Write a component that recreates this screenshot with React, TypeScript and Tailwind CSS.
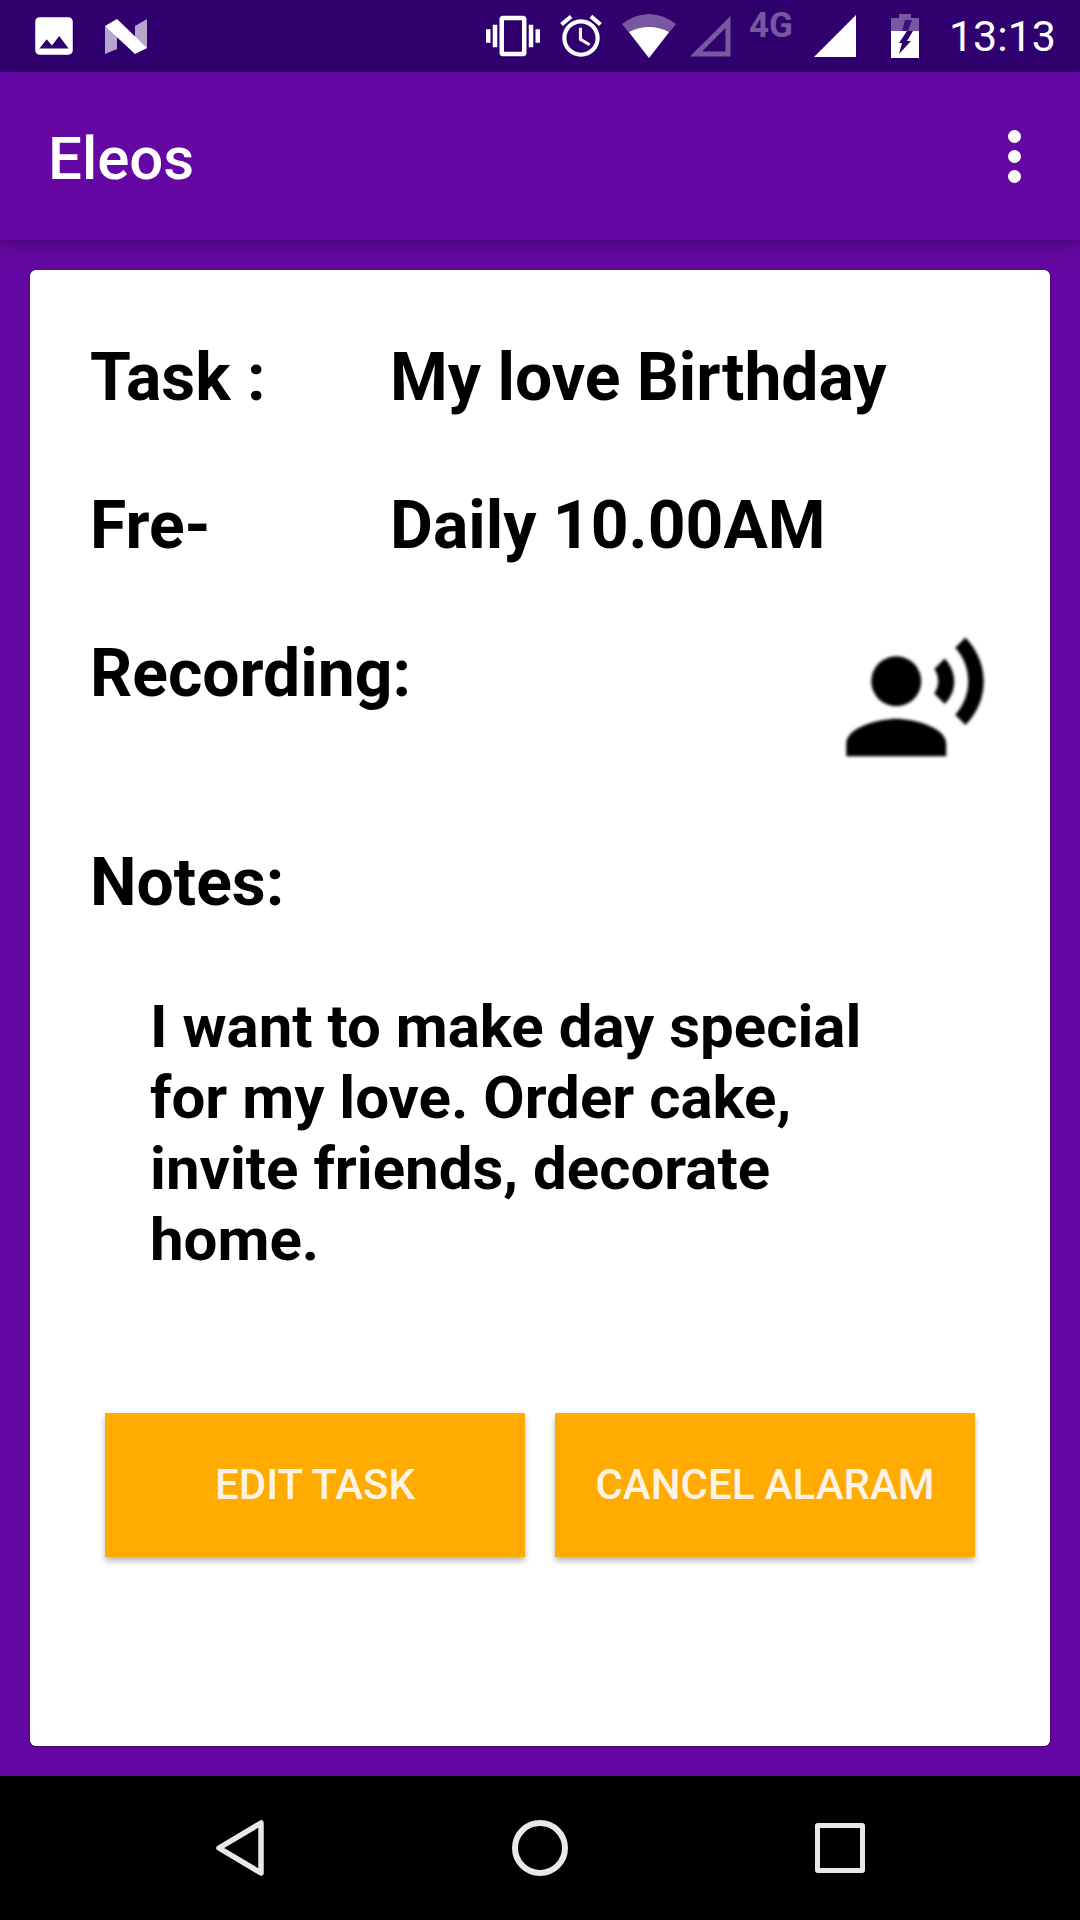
import React from 'react';

const StatusBar = () => (
  <div className="h-[72px] bg-[#30006f] flex items-center text-white shrink-0">
    {/* image notification */}
    <svg viewBox="0 0 24 24" className="w-[50px] h-[50px] ml-[29px] fill-white">
      <path d="M21 19V5c0-1.1-.9-2-2-2H5c-1.1 0-2 .9-2 2v14c0 1.1.9 2 2 2h14c1.1 0 2-.9 2-2zM8.5 13.5l2.5 3.01L14.5 12l4.5 6H5l3.5-4.5z" />
    </svg>
    {/* N logo */}
    <svg viewBox="0 0 42 35" className="w-[42px] h-[35px] ml-[26px] fill-white">
      <path d="M0 7 L12 14 V30 L0 35 Z" opacity="0.65" />
      <path d="M30 7 L42 0 V29 L30 34 Z" opacity="0.65" />
      <path d="M0 7 L12 0 L42 29 L30 35 Z" />
    </svg>
    <div className="flex-1" />
    <svg viewBox="0 0 24 24" className="w-[54px] h-[54px] fill-white">
      <path d="M0 15h2V9H0v6zm3 2h2V7H3v10zm19-8v6h2V9h-2zm-3 8h2V7h-2v10zM16.5 3h-9C6.67 3 6 3.67 6 4.5v15c0 .83.67 1.5 1.5 1.5h9c.83 0 1.5-.67 1.5-1.5v-15c0-.83-.67-1.5-1.5-1.5zM16 19H8V5h8v14z" />
    </svg>
    <svg viewBox="0 0 24 24" className="w-[50px] h-[50px] ml-[16px] fill-white">
      <path d="M22 5.72l-4.6-3.86-1.29 1.53 4.6 3.86L22 5.72zM7.88 3.39L6.6 1.86 2 5.71l1.29 1.53 4.59-3.85zM12.5 8H11v6l4.75 2.85.75-1.23-4-2.37V8zM12 4c-4.97 0-9 4.03-9 9s4.03 9 9 9c4.97 0 9-4.03 9-9s-4.03-9-9-9zm0 16c-3.87 0-7-3.13-7-7s3.13-7 7-7 7 3.13 7 7-3.13 7-7 7z" />
    </svg>
    {/* wifi */}
    <svg viewBox="0 0 54 44" className="w-[54px] h-[44px] ml-[16px] fill-white">
      <path d="M0 10 Q27 -10 54 10 L27 44 Z" opacity="0.35" />
      <path d="M7 18 Q27 8 47 18 L27 44 Z" />
    </svg>
    {/* empty signal */}
    <svg viewBox="0 0 42 42" className="w-[42px] h-[42px] ml-[13px] fill-none stroke-white opacity-35">
      <path d="M39 7 V39 H7 Z" strokeWidth="5" />
    </svg>
    <span className="ml-[18px] mb-[20px] text-[35px] leading-[36px] font-bold text-white/35 font-['Roboto',sans-serif]">4G</span>
    {/* signal */}
    <svg viewBox="0 0 42 42" className="w-[42px] h-[42px] ml-[21px] fill-white">
      <path d="M42 0 V42 H0 Z" />
    </svg>
    {/* battery */}
    <svg viewBox="0 0 28 44" className="w-[28px] h-[44px] ml-[35px]">
      <path d="M8 0 H20 V4 H28 V17 H0 V4 H8 Z" fill="white" opacity="0.35" />
      <path fillRule="evenodd" fill="white" d="M0 17 H28 V44 H0 Z M16 17 H22 L16 27 H20 L8 40 L11 29 H8 Z" />
      <path d="M14 6 H21 L17 17 H11 Z" fill="#30006f" opacity="0.8" />
    </svg>
    <span className="ml-[30px] mr-[24px] text-[43px] leading-none font-['Roboto',sans-serif]">13:13</span>
  </div>
);

const AppBar = () => (
  <div className="h-[168px] bg-[#6508a3] flex items-center justify-between pl-[48px] pr-[59px] pt-[5px] shrink-0 relative shadow-[0_6px_18px_rgba(0,0,0,0.28)]">
    <span className="text-[60px] font-medium text-white font-['Roboto',sans-serif]">Eleos</span>
    <div className="flex flex-col gap-[7px] mb-[5px]">
      <div className="w-[13px] h-[13px] rounded-full bg-white" />
      <div className="w-[13px] h-[13px] rounded-full bg-white" />
      <div className="w-[13px] h-[13px] rounded-full bg-white" />
    </div>
  </div>
);

const Row = ({ label, value }: { label: string; value: string }) => (
  <div className="flex h-[148px] items-start">
    <span className="w-[300px]">{label}</span>
    <span>{value}</span>
  </div>
);

const NavBar = () => (
  <div className="h-[144px] bg-black flex items-center shrink-0">
    <svg viewBox="0 0 48 56" className="w-[48px] h-[56px] ml-[216px] fill-none stroke-[#e8e8e8]">
      <path d="M45 3 V53 L3 28 Z" strokeWidth="5.5" strokeLinejoin="round" />
    </svg>
    <div className="w-[56px] h-[56px] ml-[248px] rounded-full border-[6px] border-[#e8e8e8]" />
    <div className="w-[50px] h-[50px] ml-[247px] rounded-[3px] border-[5px] border-[#e8e8e8]" />
  </div>
);

export default function App() {
  return (
    <div className="w-[1080px] h-[1920px] flex flex-col bg-[#6508a3] font-['Roboto',sans-serif] overflow-hidden">
      <StatusBar />
      <AppBar />
      <div className="flex-1 px-[30px] pt-[30px] pb-[30px] flex">
        <div className="flex-1 bg-white rounded-[6px] shadow-[0_1px_4px_rgba(0,0,0,0.35)] pt-[69px] pl-[60px] pr-[60px] text-black font-bold text-[66px] leading-[78px]">
          <Row label="Task :" value="My love Birthday" />
          <Row label="Fre-" value="Daily 10.00AM" />
          <div className="flex justify-between items-start h-[209px]">
            <span>Recording:</span>
            <svg viewBox="0 0 24 24" className="w-[150px] h-[150px] mr-[0px] mt-[-10px] blur-[1.5px]">
              <circle cx="9" cy="9" r="4" />
              <path d="M9 15c-2.67 0-8 1.34-8 4v2h16v-2c0-2.66-5.33-4-8-4zm7.76-9.64l-1.68 1.69c.84 1.18.84 2.71 0 3.89l1.68 1.69c2.02-2.02 2.02-5.07 0-7.27zM20.07 2l-1.63 1.63c2.77 3.02 2.77 7.56 0 10.74L20.07 16c3.9-3.89 3.91-9.95 0-14z" />
            </svg>
          </div>
          <div>Notes:</div>
          <p className="mt-[69px] ml-[60px] w-[760px] text-[60px] leading-[71px]">
            I want to make day special for my love. Order cake, invite friends, decorate home.
          </p>
          <div className="flex gap-[30px] ml-[15px] mt-[138px]">
            <button className="w-[420px] h-[144px] bg-[#ffab00] text-[#fff3e6] text-[42px] font-medium shadow-[0_4px_6px_rgba(0,0,0,0.28)]">EDIT TASK</button>
            <button className="w-[420px] h-[144px] bg-[#ffab00] text-[#fff3e6] text-[42px] font-medium shadow-[0_4px_6px_rgba(0,0,0,0.28)]">CANCEL ALARAM</button>
          </div>
        </div>
      </div>
      <NavBar />
    </div>
  );
}
